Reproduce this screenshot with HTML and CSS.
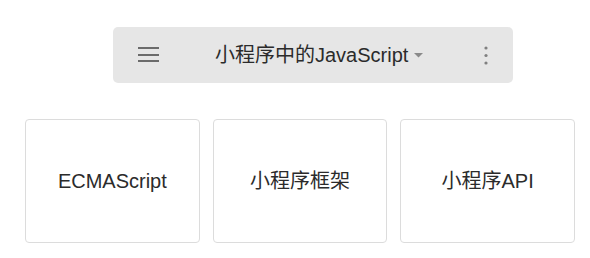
FILE: index.html
```html
<!DOCTYPE html>
<html lang="zh-CN">
<head>
<meta charset="UTF-8">
<meta name="viewport" content="width=device-width, initial-scale=1.0">
<title>小程序中的JavaScript</title>
<link rel="stylesheet" href="styles.css">
</head>
<body>

    <header class="topbar">
        <svg class="menu-icon" width="21" height="16" viewBox="0 0 21 16">
            <rect x="0" y="0" width="21" height="2" fill="#6b6b6b"/>
            <rect x="0" y="7" width="21" height="2" fill="#6b6b6b"/>
            <rect x="0" y="13" width="21" height="2" fill="#6b6b6b"/>
        </svg>
        <div class="title">
            <span>小程序中的JavaScript</span>
            <svg class="caret" width="9" height="5" viewBox="0 0 9 5">
                <polygon points="0,0 9,0 4.5,4.5" fill="#8a8a8a"/>
            </svg>
        </div>
        <svg class="more-icon" width="4" height="19" viewBox="0 0 4 19">
            <circle cx="2" cy="2" r="1.6" fill="#808080"/>
            <circle cx="2" cy="9.5" r="1.6" fill="#808080"/>
            <circle cx="2" cy="17" r="1.6" fill="#808080"/>
        </svg>
    </header>

    <section class="cards">
        <div class="card">ECMAScript</div>
        <div class="card">小程序框架</div>
        <div class="card">小程序API</div>
    </section>

</body>
</html>
```

FILE: styles.css
```css
* {
    box-sizing: border-box;
}
body {
    margin: 0;
    background: #fff;
    color: #2b2b2b;
    font-family: "Liberation Sans", "Noto Sans CJK SC", sans-serif;
}

/* top bar */
.topbar {
    display: flex;
    align-items: center;
    width: 400px;
    height: 56px;
    margin: 27px 0 0 113px;
    padding: 0 25px 0 25px;
    background: #e6e6e6;
    border-radius: 5px;
}
.menu-icon {
    display: block;
}
.title {
    display: flex;
    align-items: center;
    margin-left: 56px;
    font-size: 20px;
    line-height: 24px;
}
.caret {
    display: block;
    margin-left: 6px;
    margin-top: 1px;
}
.more-icon {
    display: block;
    margin-left: auto;
}

/* cards */
.cards {
    display: grid;
    grid-template-columns: repeat(3, 1fr);
    gap: 13px;
    width: 550px;
    margin: 36px 0 0 25px;
}
.card {
    display: flex;
    justify-content: center;
    align-items: center;
    height: 124px;
    border: 1px solid #dcdcdc;
    border-radius: 4px;
    font-size: 20px;
    line-height: 24px;
}
```
